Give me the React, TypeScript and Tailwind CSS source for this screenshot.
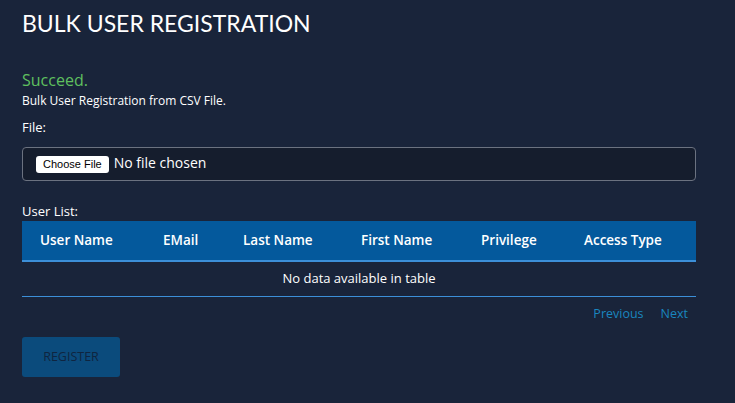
export default function App() {
  const columns = ["User Name", "EMail", "Last Name", "First Name", "Privilege", "Access Type"];
  const widths = ["w-[141px] pl-[18px]", "w-[80px]", "w-[118px]", "w-[120px]", "w-[103px]", "w-[112px]"];

  return (
    <div className="min-h-[403px] bg-[#19243a] px-[22px] pt-[7px] pb-6 text-white [font-family:'Open_Sans',sans-serif]">
      <h1 className="text-[23px] leading-[32px] [font-family:Lato,sans-serif]">
        BULK USER REGISTRATION
      </h1>

      <div className="mt-[31px] text-[16px] leading-[20px] text-[#5fc05f]">Succeed.</div>
      <div className="mt-[3px] text-[12px] leading-[16px]">Bulk User Registration from CSV File.</div>

      <div className="mt-[9px] text-[13px] leading-[18px]">File:</div>
      <div className="mt-[11px] flex h-[34px] w-[674px] items-center rounded-[4px] border border-[#6b7280] bg-[#151d2d] pl-[13px]">
        <button className="h-[17px] rounded-[3px] bg-white px-[7px] text-[11px] leading-[17px] text-black [font-family:Arial,'Liberation_Sans',sans-serif]">
          Choose File
        </button>
        <span className="ml-[5px] -mt-[2px] text-[14px] leading-[18px]">No file chosen</span>
      </div>

      <div className="mt-[21px] text-[13px] leading-[18px]">User List:</div>
      <table className="mt-[1px] w-[674px] table-fixed border-collapse">
        <thead>
          <tr className="h-[40px] bg-[#04599c]">
            {columns.map((c, i) => (
              <th
                key={c}
                className={"border-b-2 border-[#3c8fd8] text-left text-[13.5px] font-semibold " + widths[i]}
              >
                {c}
              </th>
            ))}
          </tr>
        </thead>
        <tbody>
          <tr className="h-[35px]">
            <td colSpan={6} className="border-b border-[#3c8fd8] text-center text-[13px]">
              No data available in table
            </td>
          </tr>
        </tbody>
      </table>

      <div className="mt-[8px] flex w-[674px] justify-end gap-[17px] pr-[8px] text-[12.5px] text-[#1a86bf]">
        <span>Previous</span>
        <span>Next</span>
      </div>

      <button className="mt-[14px] h-[40px] w-[98px] rounded-[3px] bg-[#0b4b7c] text-[12.5px] text-[#0f2540]">
        REGISTER
      </button>
    </div>
  );
}
